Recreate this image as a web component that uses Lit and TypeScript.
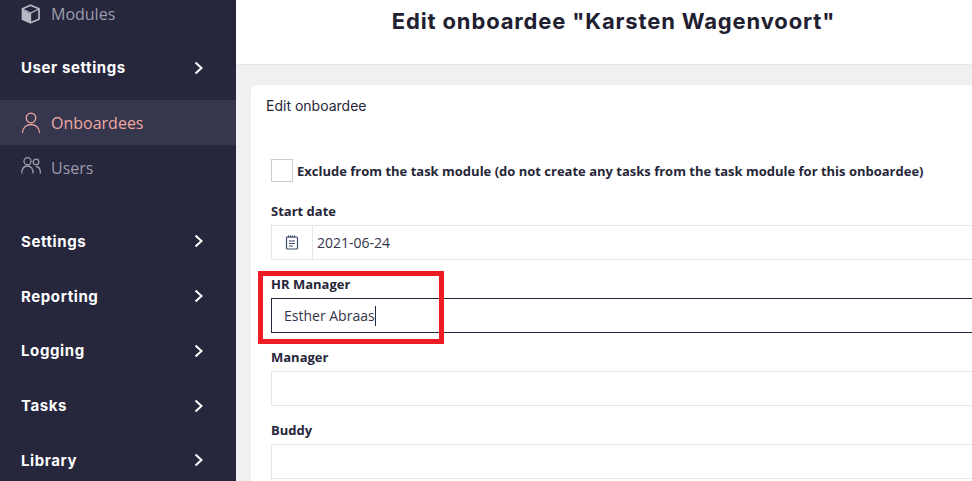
import { LitElement, html, css } from "lit";
import { customElement } from "lit/decorators.js";

const chevron = html`<svg class="chev" width="10" height="14" viewBox="0 0 10 14" fill="none" stroke="currentColor" stroke-width="2"><path d="M1.5 1.5 7.5 7l-6 5.500"/></svg>`;

@customElement("app-root")
export class AppRoot extends LitElement {
  static styles = css`
    :host { display: block; width: 972px; height: 481px; overflow: hidden; font-family: "Open Sans", sans-serif; color: #262639; position: relative; }
    .page { display: flex; height: 481px; background: #f0f0f3; }
    .side { width: 236px; flex: none; background: #26263d; height: 481px; display: flex; flex-direction: column; font-size: 16px; color: #9c9cac; overflow: hidden; }
    .item { display: flex; align-items: center; height: 45px; flex: none; padding-left: 21px; gap: 10px; }
    .item svg { flex: none; }
    .mod { height: 28px; margin-bottom: 12px; align-items: flex-start; }
    .mod span { line-height: 28px; }
    .mod svg { margin-top: 4px; }
    .users svg { margin-bottom: 4px; }
    .head { height: 54.75px; padding: 0 32px 0 21px; justify-content: space-between; color: #fff; font-family: Inter, sans-serif; font-weight: 700; font-size: 15px; letter-spacing: 0.6px; }
    .first { height: 55px; margin-bottom: 5px; }
    .active { background: #36364f; color: #f0a9a0; }
    .spacer { height: 24px; flex: none; }
    .main { flex: 1; min-width: 0; display: flex; flex-direction: column; }
    .top { height: 65px; flex: none; box-sizing: border-box; background: #fff; border-bottom: 1px solid #e6e6e9; display: flex; justify-content: center; padding: 7px 0 0 19px; }
    h1 { margin: 0; font: 700 22px/28px Inter, sans-serif; letter-spacing: 0.85px; color: #202030; white-space: nowrap; }
    .card { flex: 1; margin: 20px 0 0 15px; background: #fff; border-radius: 6px 0 0 0; padding: 11px 0 0 15px; }
    .title { font: 400 14px/20px Inter, sans-serif; color: #262639; }
    .check { display: flex; align-items: center; gap: 4px; margin: 43px 0 0 5px; font-weight: 700; font-size: 13px; height: 23px; white-space: nowrap; }
    .box { width: 20px; height: 21px; border: 1px solid #cfcbc6; background: #fff; flex: none; }
    .form { margin: 19px 0 0 5px; display: flex; flex-direction: column; gap: 14px; }
    label { display: block; font-weight: 700; font-size: 13px; line-height: 20px; margin-bottom: 4px; color: #262639; }
    .field { height: 35px; box-sizing: border-box; border: 1px solid #e6e6e6; border-right: none; display: flex; align-items: center; font-size: 14px; color: #33334a; }
    .addon { width: 40px; height: 100%; border-right: 1px solid #e6e6e6; display: flex; align-items: center; justify-content: center; flex: none; }
    .val { padding-left: 4px; }
    .focused { border-color: #26263d; padding-left: 12px; }
    .caret { display: inline-block; width: 1px; height: 20px; background: #26263d; }
    .mark { position: absolute; left: 258px; top: 271px; width: 176px; height: 63px; border: 5px solid #ed1c24; pointer-events: none; }
  `;
  render() {
    return html`<div class="page">
      <nav class="side">
        <div class="item mod">
          <svg width="20" height="20" viewBox="0 0 20 20" fill="none"><path d="M1.500 5.500 9.500 10v8.500l-8-3.500Z" fill="#b9b9c6"/><path d="M9.500 1.200 1.500 4.800v10.400l8 3.600 8.500-3.600V4.800L9.500 1.200Z" stroke="#b9b9c6" stroke-width="1.700" stroke-linejoin="round"/><path d="M1.500 5 9.500 9l8.500-4M9.500 9v9.500" stroke="#b9b9c6" stroke-width="1.300"/></svg>
          <span>Modules</span>
        </div>
        <div class="item head first"><span>User settings</span>${chevron}</div>
        <div class="item active">
          <svg width="20" height="22" viewBox="0 0 20 22" fill="none" stroke="currentColor" stroke-width="1.300"><circle cx="10" cy="6" r="4.800"/><path d="M1.500 21c0-5 3.500-8.500 8.500-8.500s8.500 3.500 8.500 8.500"/></svg>
          <span>Onboardees</span>
        </div>
        <div class="item users">
          <svg width="20" height="17" viewBox="0 0 20 17" fill="none" stroke="currentColor" stroke-width="1.300"><circle cx="6.500" cy="4.200" r="3.500"/><circle cx="15" cy="5" r="2.800"/><path d="M.8 16.500c0-5 2.300-7.500 5.700-7.500s5.700 2.500 5.700 7.500M15 9.500c2.800 0 4.400 2.800 4.400 7"/></svg>
          <span>Users</span>
        </div>
        <div class="spacer"></div>
        <div class="item head"><span>Settings</span>${chevron}</div>
        <div class="item head"><span>Reporting</span>${chevron}</div>
        <div class="item head"><span>Logging</span>${chevron}</div>
        <div class="item head"><span>Tasks</span>${chevron}</div>
        <div class="item head"><span>Library</span>${chevron}</div>
      </nav>
      <main class="main">
        <header class="top"><h1>Edit onboardee "Karsten Wagenvoort"</h1></header>
        <section class="card">
          <div class="title">Edit onboardee</div>
          <div class="check"><span class="box"></span><span>Exclude from the task module (do not create any tasks from the task module for this onboardee)</span></div>
          <div class="form">
            <div><label>Start date</label>
              <div class="field"><span class="addon"><svg width="14" height="15" viewBox="0 0 14 15" fill="none" stroke="#3a4a66" stroke-width="1.200"><rect x="1.500" y="2" width="11" height="12" rx="1"/><path d="M3.500 .5v2M5.500 .5v2M7.500 .5v2M9.500 .5v2M4 6h6M4 8.500h6M4 11h4"/></svg></span><span class="val">2021-06-24</span></div>
            </div>
            <div><label>HR Manager</label>
              <div class="field focused"><span>Esther Abraas</span><span class="caret"></span></div>
            </div>
            <div><label>Manager</label><div class="field"></div></div>
            <div><label>Buddy</label><div class="field"></div></div>
          </div>
        </section>
      </main>
      <div class="mark"></div>
    </div>`;
  }
}
